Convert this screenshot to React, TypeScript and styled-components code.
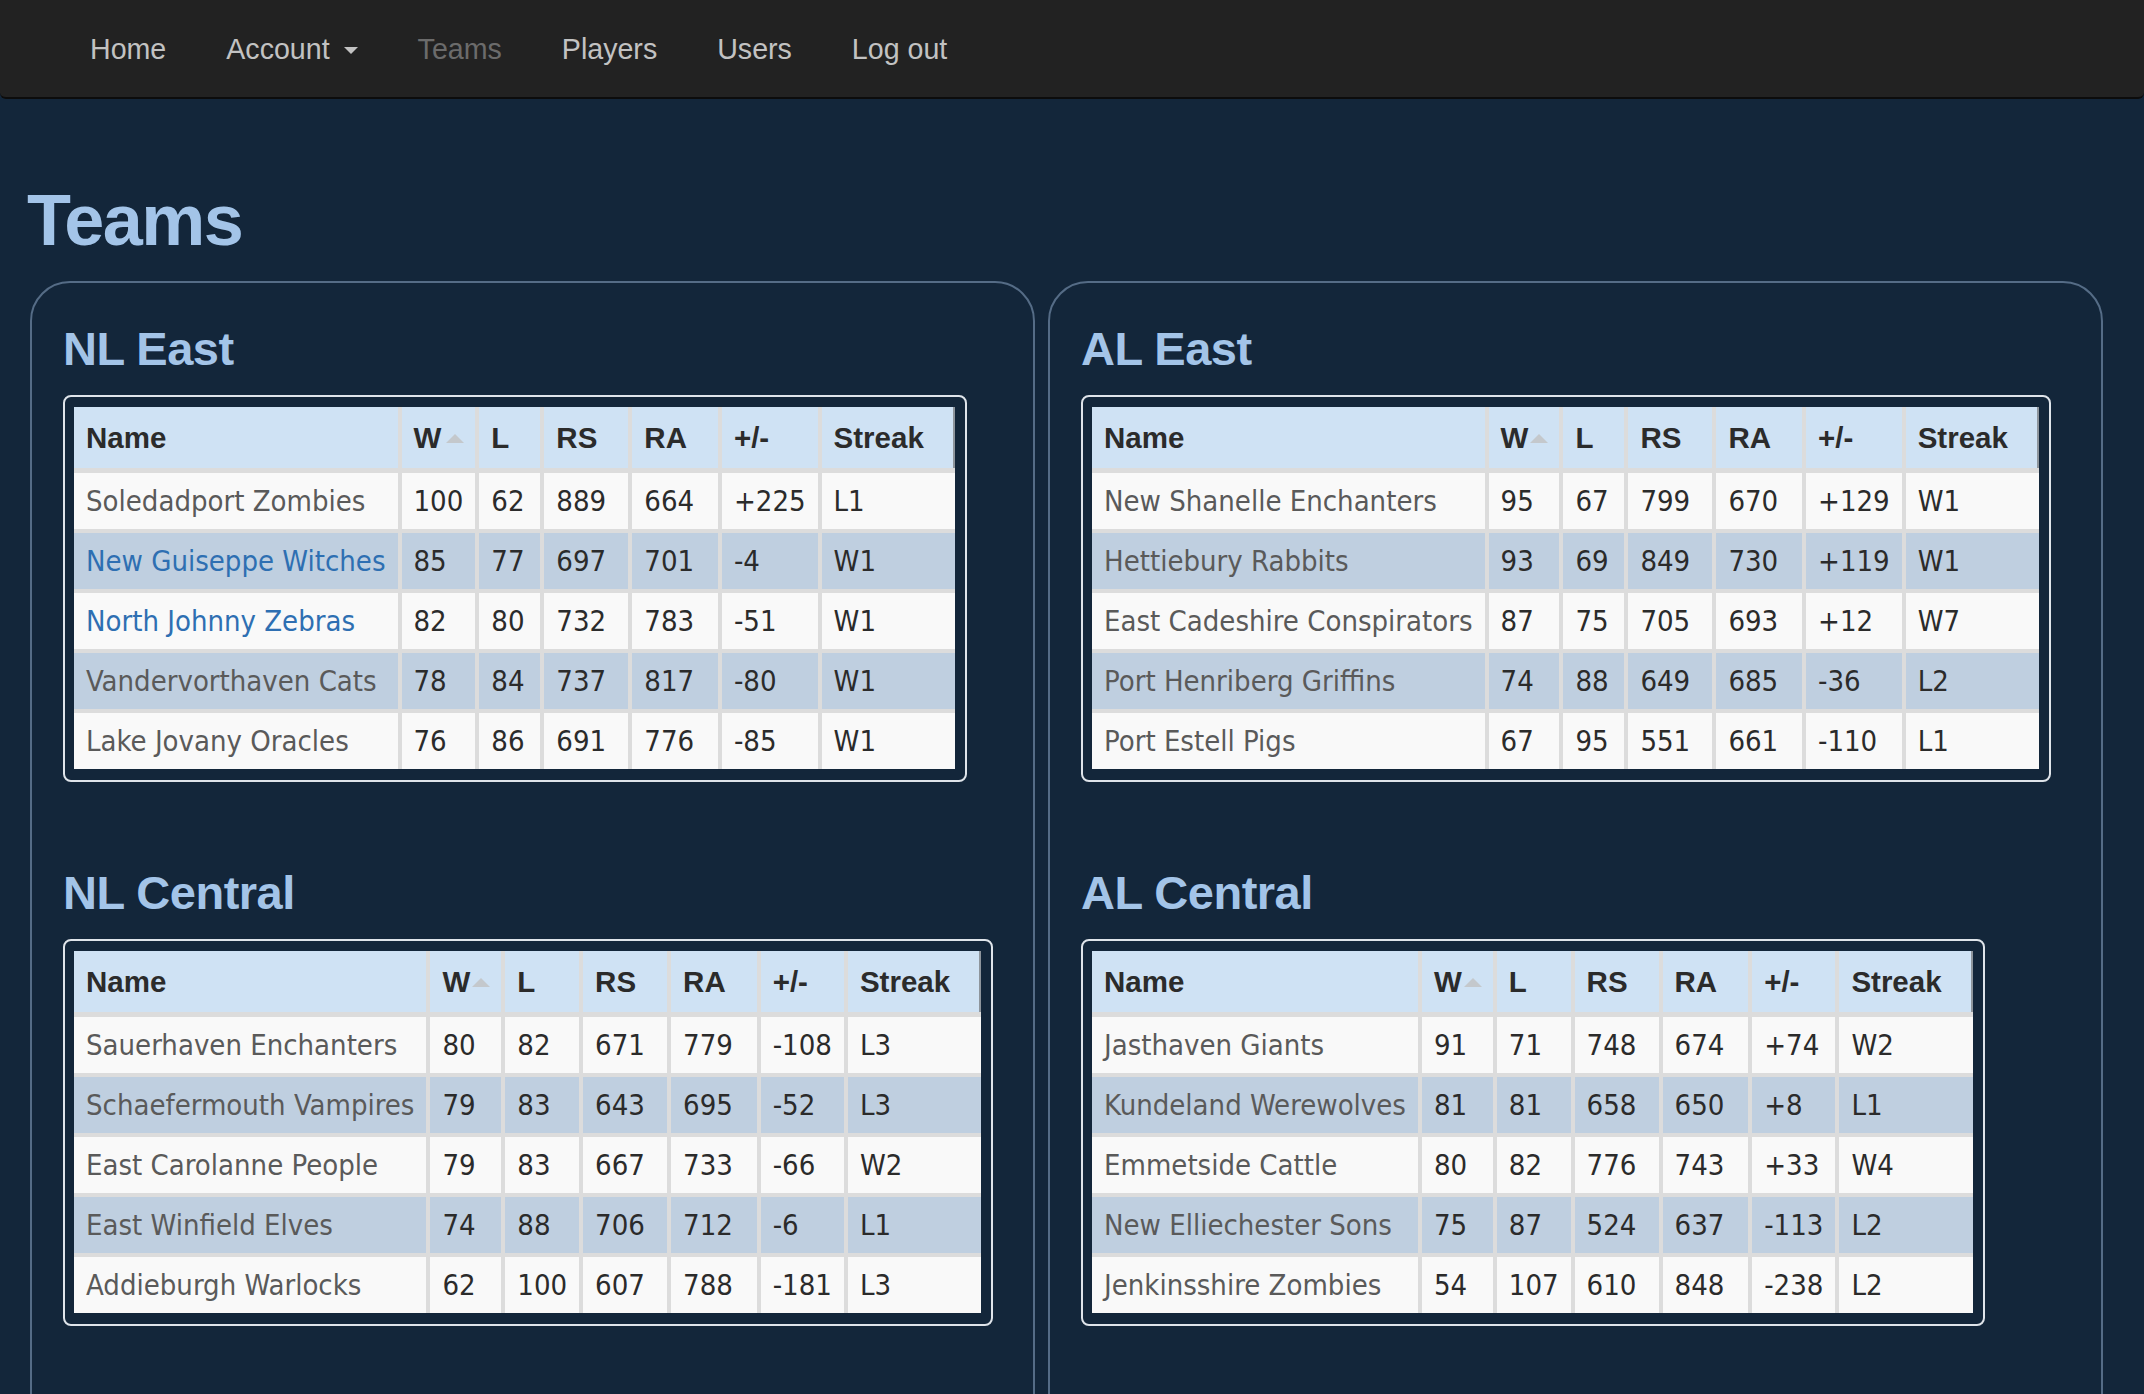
import React from "react";
import styled, { createGlobalStyle } from "styled-components";

const GlobalStyle = createGlobalStyle`
  html, body {
    margin: 0;
    padding: 0;
    background: #13263a;
    font-family: "Liberation Sans", Arial, sans-serif;
  }
`;

const NavBar = styled.nav`
  height: 97px;
  background: #222222;
  border-bottom: 2px solid #0c0c0c;
  border-radius: 0 0 6px 6px;
  display: flex;
  align-items: center;
  padding-left: 60px;
`;

const NavLink = styled.a<{ $active?: boolean }>`
  font-family: "Liberation Sans", Arial, sans-serif;
  font-size: 28.6px;
  color: ${(p) => (p.$active ? "#6b6b6b" : "#c2c2c2")};
  padding: 0 30px;
  text-decoration: none;
  display: flex;
  align-items: center;
  line-height: 40px;
`;

const Caret = styled.span`
  display: inline-block;
  width: 0;
  height: 0;
  margin-left: 14px;
  margin-top: 3px;
  border-left: 7px solid transparent;
  border-right: 7px solid transparent;
  border-top: 7px solid #c2c2c2;
`;

const Page = styled.main`
  padding: 0 41px 0 30px;
`;

const Title = styled.h1`
  margin: 82px 0 21px -3px;
  font-family: "Liberation Sans", Arial, sans-serif;
  font-weight: 700;
  font-size: 72px;
  line-height: 79px;
  letter-spacing: -1.5px;
  color: #a3c4e8;
`;

const Columns = styled.div`
  display: grid;
  grid-template-columns: 1005px 1055px;
  column-gap: 13px;
`;

const Panel = styled.section`
  border: 2px solid #556c86;
  border-radius: 40px 40px 0 0;
  padding: 38px 0 120px 31px;
`;

const Division = styled.div`
  margin-bottom: 79px;
  &:last-child {
    margin-bottom: 0;
  }
`;

const DivisionTitle = styled.h2`
  margin: 0 0 18px;
  font-family: "Liberation Sans", Arial, sans-serif;
  font-weight: 700;
  font-size: 47px;
  line-height: 56px;
  letter-spacing: -0.5px;
  color: #a3c4e8;
`;

const TableFrame = styled.div`
  display: inline-block;
  border: 2px solid #dfe4ea;
  border-radius: 8px;
  padding: 10px 10px 11px 9px;
`;

const Table = styled.table`
  border-collapse: collapse;
  border-style: hidden;
`;

const HeadCell = styled.th<{ $sorted?: boolean }>`
  position: relative;
  background: #cfe2f4;
  text-align: left;
  font-family: "Liberation Sans", Arial, sans-serif;
  font-weight: 700;
  font-size: 29.5px;
  line-height: 37px;
  color: #2b2b2b;
  padding: 12px 31px 12px 12px;
  border: 4px solid #dcdcdc;
  border-bottom-width: 5px;
  white-space: nowrap;
  &:last-child {
    box-shadow: inset -2px 0 0 #8e959c;
  }
  &::after {
    content: "";
    display: ${(p) => (p.$sorted ? "block" : "none")};
    position: absolute;
    right: 11px;
    top: 50%;
    margin-top: -4px;
    width: 0;
    height: 0;
    border-left: 9px solid transparent;
    border-right: 9px solid transparent;
    border-bottom: 9px solid #c4c8cc;
  }
`;

const Row = styled.tr<{ $alt: boolean }>`
  background: ${(p) => (p.$alt ? "#bfcfe0" : "#f9f9f9")};
`;

const Cell = styled.td<{ $name?: boolean; $link?: boolean }>`
  font-family: "DejaVu Sans Condensed", "DejaVu Sans", Verdana, sans-serif;
  font-stretch: condensed;
  font-size: 29px;
  line-height: 32px;
  padding: 12px;
  border: 4px solid #dcdcdc;
  white-space: nowrap;
  color: ${(p) => (p.$link ? "#2e6fb2" : p.$name ? "#5a5a5a" : "#2b2b2b")};
`;

type Team = {
  name: string;
  w: number;
  l: number;
  rs: number;
  ra: number;
  diff: string;
  streak: string;
  link?: boolean;
};

type DivisionData = { title: string; teams: Team[] };

const t = (
  name: string,
  w: number,
  l: number,
  rs: number,
  ra: number,
  diff: string,
  streak: string,
  link = false
): Team => ({ name, w, l, rs, ra, diff, streak, link });

const left: DivisionData[] = [
  {
    title: "NL East",
    teams: [
      t("Soledadport Zombies", 100, 62, 889, 664, "+225", "L1"),
      t("New Guiseppe Witches", 85, 77, 697, 701, "-4", "W1", true),
      t("North Johnny Zebras", 82, 80, 732, 783, "-51", "W1", true),
      t("Vandervorthaven Cats", 78, 84, 737, 817, "-80", "W1"),
      t("Lake Jovany Oracles", 76, 86, 691, 776, "-85", "W1"),
    ],
  },
  {
    title: "NL Central",
    teams: [
      t("Sauerhaven Enchanters", 80, 82, 671, 779, "-108", "L3"),
      t("Schaefermouth Vampires", 79, 83, 643, 695, "-52", "L3"),
      t("East Carolanne People", 79, 83, 667, 733, "-66", "W2"),
      t("East Winfield Elves", 74, 88, 706, 712, "-6", "L1"),
      t("Addieburgh Warlocks", 62, 100, 607, 788, "-181", "L3"),
    ],
  },
];

const right: DivisionData[] = [
  {
    title: "AL East",
    teams: [
      t("New Shanelle Enchanters", 95, 67, 799, 670, "+129", "W1"),
      t("Hettiebury Rabbits", 93, 69, 849, 730, "+119", "W1"),
      t("East Cadeshire Conspirators", 87, 75, 705, 693, "+12", "W7"),
      t("Port Henriberg Griffins", 74, 88, 649, 685, "-36", "L2"),
      t("Port Estell Pigs", 67, 95, 551, 661, "-110", "L1"),
    ],
  },
  {
    title: "AL Central",
    teams: [
      t("Jasthaven Giants", 91, 71, 748, 674, "+74", "W2"),
      t("Kundeland Werewolves", 81, 81, 658, 650, "+8", "L1"),
      t("Emmetside Cattle", 80, 82, 776, 743, "+33", "W4"),
      t("New Elliechester Sons", 75, 87, 524, 637, "-113", "L2"),
      t("Jenkinsshire Zombies", 54, 107, 610, 848, "-238", "L2"),
    ],
  },
];

const headers = ["Name", "W", "L", "RS", "RA", "+/-", "Streak"];

function Standings({ data }: { data: DivisionData }) {
  return (
    <Division>
      <DivisionTitle>{data.title}</DivisionTitle>
      <TableFrame>
        <Table>
          <thead>
            <tr>
              {headers.map((h) => (
                <HeadCell key={h} $sorted={h === "W"}>
                  {h}
                </HeadCell>
              ))}
            </tr>
          </thead>
          <tbody>
            {data.teams.map((team, i) => (
              <Row key={team.name} $alt={i % 2 === 1}>
                <Cell $name $link={team.link}>
                  {team.name}
                </Cell>
                <Cell>{team.w}</Cell>
                <Cell>{team.l}</Cell>
                <Cell>{team.rs}</Cell>
                <Cell>{team.ra}</Cell>
                <Cell>{team.diff}</Cell>
                <Cell>{team.streak}</Cell>
              </Row>
            ))}
          </tbody>
        </Table>
      </TableFrame>
    </Division>
  );
}

export default function App() {
  return (
    <>
      <GlobalStyle />
      <NavBar>
        <NavLink href="#">Home</NavLink>
        <NavLink href="#">
          Account
          <Caret />
        </NavLink>
        <NavLink href="#" $active>
          Teams
        </NavLink>
        <NavLink href="#">Players</NavLink>
        <NavLink href="#">Users</NavLink>
        <NavLink href="#">Log out</NavLink>
      </NavBar>
      <Page>
        <Title>Teams</Title>
        <Columns>
          <Panel>
            {left.map((d) => (
              <Standings key={d.title} data={d} />
            ))}
          </Panel>
          <Panel>
            {right.map((d) => (
              <Standings key={d.title} data={d} />
            ))}
          </Panel>
        </Columns>
      </Page>
    </>
  );
}
